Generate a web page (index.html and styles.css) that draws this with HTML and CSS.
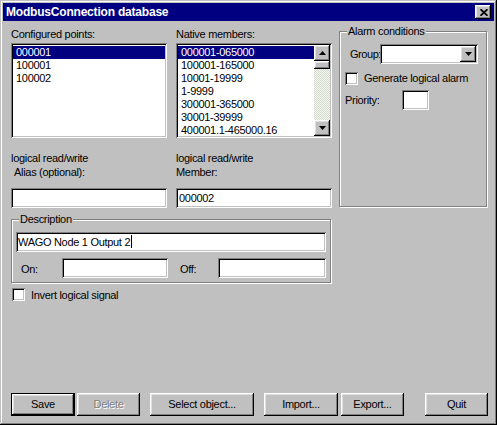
FILE: index.html
```html
<!DOCTYPE html>
<html lang="en">
<head>
<meta charset="utf-8">
<title>ModbusConnection database</title>
<link rel="stylesheet" href="styles.css">
</head>
<body>
<div class="window">
  <div class="titlebar">
    <span class="title">ModbusConnection database</span>
    <div class="close raised">
      <svg width="8" height="7" viewBox="0 0 8 7"><path d="M0.5 0.2 L7.5 6.8 M7.5 0.2 L0.5 6.8" stroke="#000" stroke-width="1.7"/></svg>
    </div>
  </div>
  <div class="client">
    <div class="top">
      <div class="col">
        <div class="label">Configured points:</div>
        <div class="listbox sunken">
          <div class="items">
            <div class="item sel">000001</div>
            <div class="item">100001</div>
            <div class="item">100002</div>
          </div>
        </div>
        <div class="label rw">logical read/write</div>
        <div class="label sub indent">Alias (optional):</div>
        <div class="field sunken wide"></div>
      </div>
      <div class="col">
        <div class="label">Native members:</div>
        <div class="listbox sunken">
          <div class="items">
            <div class="item sel">000001-065000</div>
            <div class="item">100001-165000</div>
            <div class="item">10001-19999</div>
            <div class="item">1-9999</div>
            <div class="item">300001-365000</div>
            <div class="item">30001-39999</div>
            <div class="item">400001.1-465000.16</div>
          </div>
          <div class="scrollbar">
            <div class="sbtn raised">
              <svg width="7" height="4" viewBox="0 0 7 4"><polygon points="3.5,0 7,4 0,4" fill="#000"/></svg>
            </div>
            <div class="thumb raised"></div>
            <div class="track"></div>
            <div class="sbtn raised">
              <svg width="7" height="4" viewBox="0 0 7 4"><polygon points="0,0 7,0 3.5,4" fill="#000"/></svg>
            </div>
          </div>
        </div>
        <div class="label rw">logical read/write</div>
        <div class="label sub">Member:</div>
        <div class="field sunken wide"><span class="ftext">000002</span></div>
      </div>
      <div class="group alarm">
        <span class="glabel">Alarm conditions</span>
        <div class="grouprow">
          <span class="glab">Group:</span>
          <div class="combo sunken">
            <div class="sbtn raised">
              <svg width="7" height="4" viewBox="0 0 7 4"><polygon points="0,0 7,0 3.5,4" fill="#000"/></svg>
            </div>
          </div>
        </div>
        <div class="checkrow alarmcheck">
          <span class="checkbox sunken"></span>
          <span class="ctext">Generate logical alarm</span>
        </div>
        <div class="prio">
          <span class="plab">Priority:</span>
          <div class="pbox sunken"></div>
        </div>
      </div>
    </div>

    <div class="group desc">
      <span class="glabel">Description</span>
      <div class="dfield sunken"><span class="ftext">WAGO Node 1 Output 2</span><span class="caret"></span></div>
      <div class="onoff">
        <span class="onlab">On:</span>
        <div class="onbox sunken"></div>
        <span class="offlab">Off:</span>
        <div class="offbox sunken"></div>
      </div>
    </div>

    <div class="checkrow invert">
      <span class="checkbox sunken"></span>
      <span class="ctext">Invert logical signal</span>
    </div>

    <div class="buttons">
      <div class="btn raised default w-save">Save</div>
      <div class="btn raised disabled w-delete">Delete</div>
      <div class="btn raised w-select">Select object...</div>
      <div class="btn raised w-import">Import...</div>
      <div class="btn raised w-export">Export...</div>
      <div class="btn raised w-quit">Quit</div>
    </div>
  </div>
</div>
</body>
</html>
```
FILE: styles.css
```css
* { box-sizing: border-box; margin: 0; padding: 0; }
html, body { width: 497px; height: 425px; overflow: hidden; background: #c0c0c0; }
body {
  font-family: "Liberation Sans", Arial, sans-serif;
  font-size: 11px;
  line-height: 13px;
  letter-spacing: -0.3px;
  color: #000;
}

.raised {
  background: #c0c0c0;
  box-shadow: inset -1px -1px #000, inset 1px 1px #fff, inset -2px -2px #808080, inset 2px 2px #dfdfdf;
}
.sunken {
  background: #fff;
  box-shadow: inset 1px 1px #808080, inset -1px -1px #fff, inset 2px 2px #000, inset -2px -2px #c0c0c0;
}

.window {
  width: 497px;
  height: 425px;
  padding: 3px;
  background: #c0c0c0;
  box-shadow: inset -1px -1px #000, inset 1px 1px #c0c0c0, inset -2px -2px #808080, inset 2px 2px #fff;
  display: flex;
  flex-direction: column;
}

.titlebar {
  height: 18px;
  background: #000080;
  display: flex;
  align-items: center;
  justify-content: space-between;
  padding: 0 3px 0 3px;
}
.title {
  color: #fff;
  font-weight: bold;
  font-size: 12px;
  letter-spacing: -0.2px;
  line-height: 18px;
}
.close {
  width: 16px;
  height: 14px;
  display: flex;
  align-items: center;
  justify-content: center;
  padding-left: 1px;
}
.close svg { display: block; }

.client {
  flex: 1;
  display: flex;
  flex-direction: column;
  padding-left: 8px;
}

.top { display: flex; align-items: flex-start; }
.col { width: 156px; padding-top: 7px; }
.col + .col { margin-left: 9px; }

.label { height: 13px; white-space: nowrap; }
.label.rw { margin-top: 14px; }
.label.sub { margin-top: 1px; }
.label.indent { padding-left: 3px; }

.listbox {
  margin-top: 2px;
  height: 95px;
  padding: 2px;
  display: flex;
}
.items { flex: 1; padding-top: 1px; overflow: hidden; }
.item { height: 13px; padding-left: 3px; white-space: nowrap; }
.item.sel { background: #000080; color: #fff; }

.scrollbar { width: 16px; display: flex; flex-direction: column; }
.sbtn {
  width: 16px;
  height: 16px;
  display: flex;
  align-items: center;
  justify-content: center;
  flex: none;
}
.sbtn svg { display: block; }
.thumb { height: 8px; flex: none; }
.track {
  flex: 1;
  background-color: #fff;
  background-image: repeating-conic-gradient(#d4dccc 0 25%, #f4f8f0 0 50%);
  background-size: 2px 2px;
}

.field { margin-top: 9px; height: 20px; padding: 2px 2px 0 3px; white-space: nowrap; }
.wide { width: 156px; }
.ftext { display: inline-block; line-height: 13px; padding-top: 2px; }

.group {
  position: relative;
  border: 1px solid #808080;
  box-shadow: inset 1px 1px #fff, 1px 1px #fff;
}
.glabel {
  position: absolute;
  top: -7px;
  left: 7px;
  padding: 0 1px;
  background: #c0c0c0;
  white-space: nowrap;
  line-height: 13px;
}

.alarm { margin-left: 7px; margin-top: 10px; width: 148px; height: 176px; }
.grouprow { display: flex; align-items: center; margin-top: 12px; }
.glab { width: 30px; margin-left: 10px; white-space: nowrap; letter-spacing: -0.45px; }
.combo {
  width: 98px;
  height: 20px;
  padding: 2px;
  display: flex;
  justify-content: flex-end;
}

.checkrow { display: flex; align-items: flex-start; }
.checkbox { width: 13px; height: 13px; flex: none; }
.ctext { margin-left: 6px; white-space: nowrap; line-height: 13px; }
.alarmcheck { margin-top: 8px; margin-left: 5px; }

.prio { display: flex; align-items: center; margin-top: 5px; margin-left: 5px; }
.plab { width: 57px; white-space: nowrap; padding-top: 1px; }
.pbox { width: 27px; height: 20px; }

.desc { margin-top: 11px; width: 320px; height: 64px; }
.dfield {
  margin: 12px 0 0 4px;
  width: 310px;
  height: 20px;
  padding: 2px 2px 0 2px;
  white-space: nowrap;
  display: flex;
  align-items: flex-start;
}
.caret {
  display: inline-block;
  width: 1px;
  height: 13px;
  margin-top: 1px;
  margin-left: 1px;
  background: #000;
}
.onoff { display: flex; align-items: center; margin-top: 6px; }
.onlab { margin-left: 9px; width: 41px; padding-top: 2px; }
.onbox { width: 106px; height: 20px; }
.offlab { margin-left: 12px; width: 38px; padding-top: 2px; }
.offbox { width: 108px; height: 20px; }

.invert { margin-top: 5px; margin-left: 1px; }
.invert .ctext { padding-top: 1px; }

.buttons { margin-top: auto; margin-bottom: 6px; display: flex; }
.btn {
  height: 23px;
  display: flex;
  align-items: center;
  justify-content: center;
  white-space: nowrap;
  padding-bottom: 1px;
}
.btn.default { border: 1px solid #000; }
.btn.disabled { color: #808080; text-shadow: 1px 1px #fff; }
.w-save { width: 64px; }
.w-delete { width: 63px; margin-left: 2px; }
.w-select { width: 104px; margin-left: 10px; }
.w-import { width: 74px; margin-left: 10px; }
.w-export { width: 63px; margin-left: 3px; }
.w-quit { width: 63px; margin-left: 21px; }
```
